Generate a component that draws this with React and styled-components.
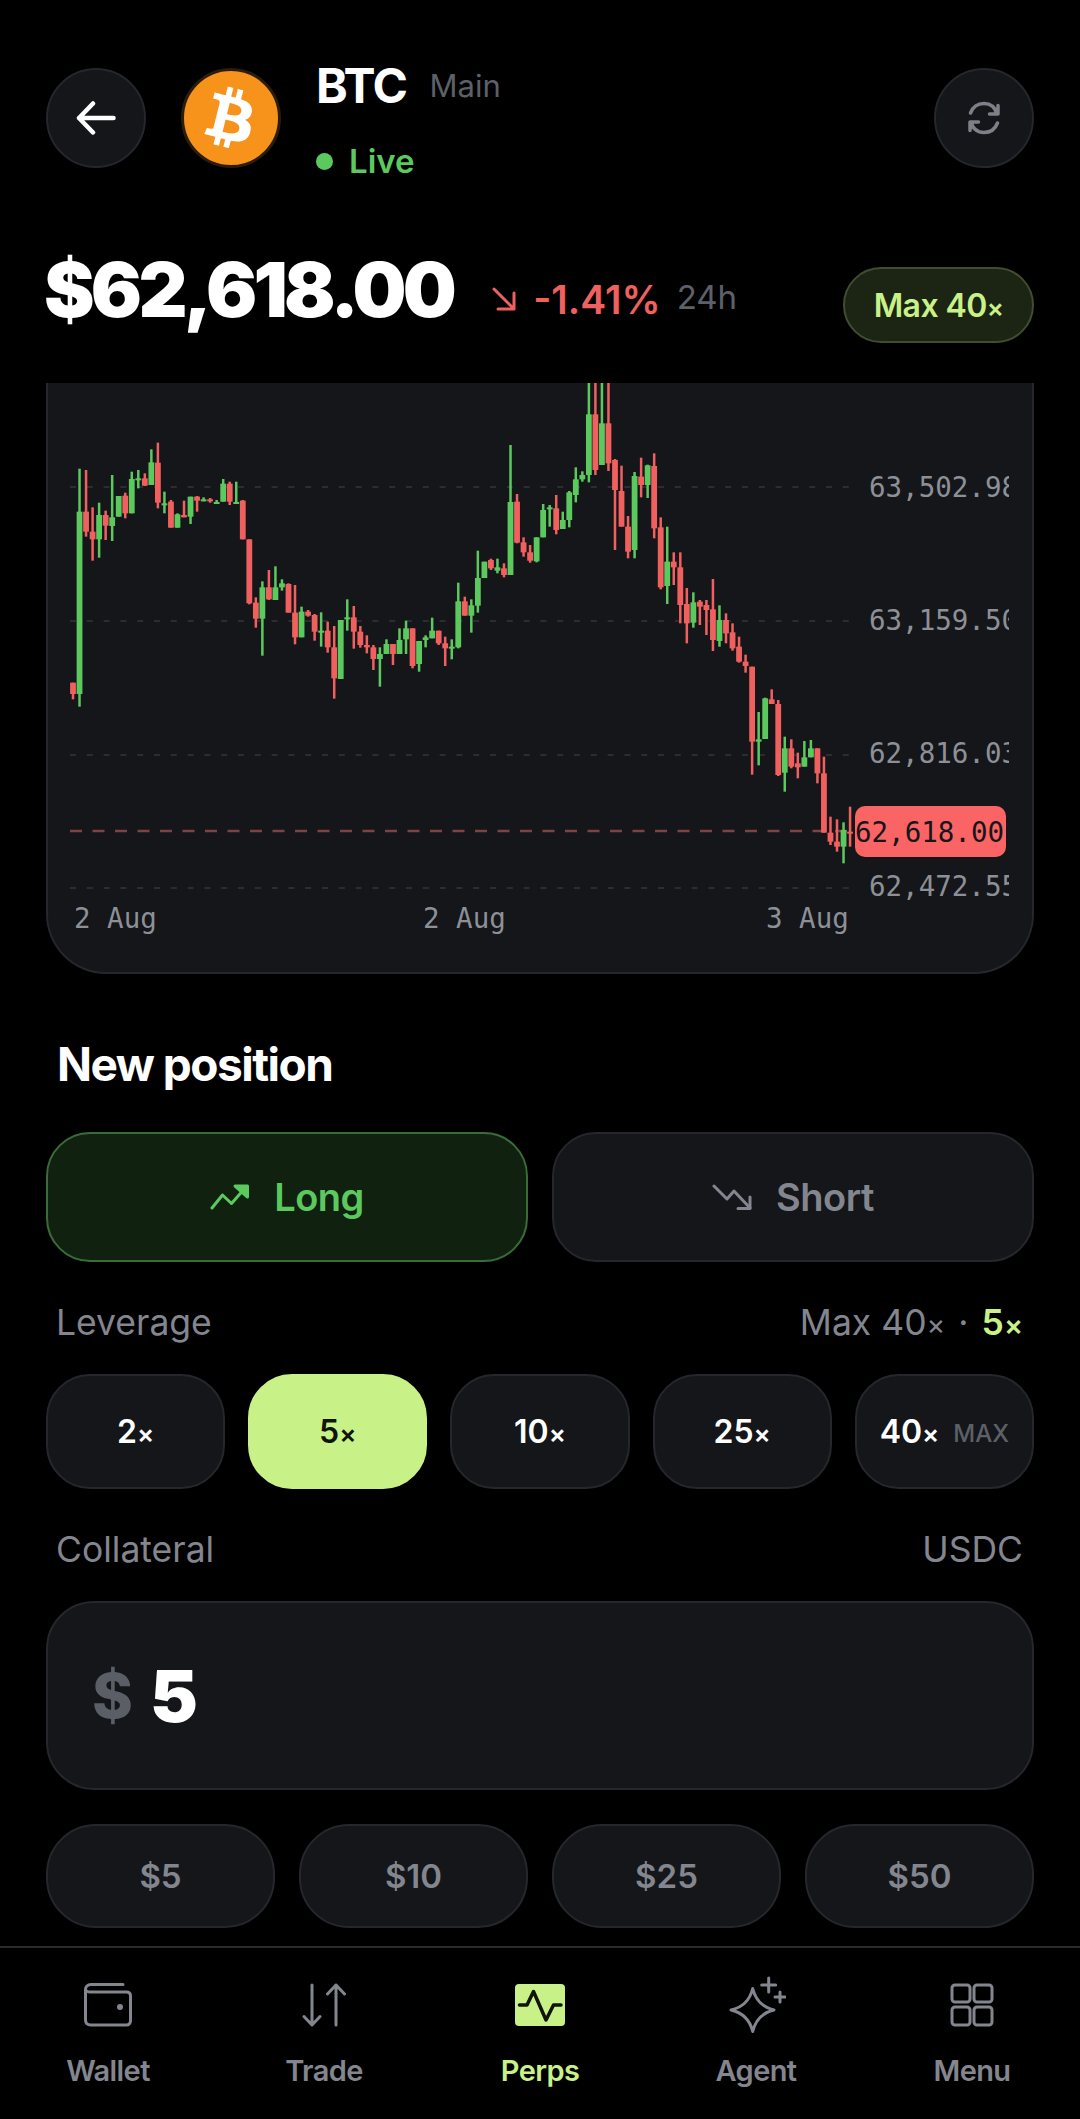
import React from "react";
import styled, { createGlobalStyle } from "styled-components";
import { FaBtc } from "react-icons/fa";

const GREEN = "#5cc95f";
const RED = "#f0605f";
const LIME = "#c8f288";
const GREY = "#83868e";
const PANEL = "#14161a";
const LINE = "#25272c";

// up, high, body top, body bottom, low (y values are 3x chart px, from 380)
const candles = [
  [0, 908, 908, 942, 958], [1, 266, 395, 942, 980], [0, 270, 395, 455, 470], [0, 382, 455, 478, 542],
  [1, 368, 405, 478, 533], [0, 392, 405, 437, 480], [1, 285, 412, 438, 483], [1, 348, 348, 410, 410],
  [0, 338, 347, 400, 415], [1, 275, 297, 400, 400], [1, 270, 295, 300, 325], [0, 280, 295, 317, 318],
  [1, 208, 247, 315, 315], [0, 188, 248, 368, 385], [1, 335, 370, 376, 400], [0, 360, 365, 443, 443],
  [1, 400, 403, 443, 443], [0, 362, 405, 412, 412], [1, 350, 350, 410, 432], [0, 348, 350, 362, 395],
  [1, 352, 358, 364, 364], [0, 354, 358, 364, 368], [1, 360, 366, 372, 372], [1, 297, 311, 365, 365],
  [0, 305, 311, 365, 375], [1, 305, 366, 372, 372], [0, 360, 362, 478, 478], [0, 478, 478, 670, 673],
  [0, 652, 668, 716, 743], [1, 604, 622, 716, 827], [0, 570, 622, 658, 660], [1, 559, 622, 660, 660],
  [1, 598, 610, 622, 632], [0, 610, 612, 698, 698], [0, 615, 698, 772, 793], [1, 680, 695, 772, 772],
  [0, 690, 695, 707, 710], [0, 702, 705, 755, 782], [1, 697, 752, 758, 800], [0, 725, 752, 802, 818],
  [0, 738, 802, 895, 956], [1, 720, 720, 897, 897], [1, 658, 712, 718, 752], [0, 678, 712, 755, 806],
  [0, 738, 755, 795, 803], [0, 766, 795, 802, 820], [0, 795, 802, 837, 870], [1, 802, 822, 837, 920],
  [1, 778, 792, 822, 822], [0, 792, 792, 822, 855], [1, 745, 780, 822, 822], [1, 722, 745, 778, 822],
  [0, 745, 745, 858, 865], [1, 783, 783, 852, 875], [1, 766, 772, 780, 802], [1, 713, 752, 775, 775],
  [0, 752, 752, 790, 795], [0, 770, 790, 805, 858], [1, 778, 800, 806, 838], [1, 608, 664, 802, 805],
  [0, 650, 664, 707, 707], [1, 658, 676, 707, 758], [1, 512, 594, 677, 698], [1, 545, 545, 594, 594],
  [0, 536, 540, 565, 570], [1, 536, 562, 572, 580], [0, 550, 565, 585, 592], [1, 195, 366, 585, 585],
  [0, 342, 365, 488, 490], [0, 472, 487, 517, 530], [0, 495, 517, 542, 548], [1, 472, 472, 544, 547],
  [1, 372, 390, 472, 472], [1, 375, 382, 388, 440], [0, 345, 385, 450, 463], [1, 395, 420, 447, 447],
  [1, 333, 337, 420, 442], [1, 262, 298, 345, 367], [1, 274, 285, 298, 305], [1, -20, 103, 285, 307],
  [0, -20, 103, 270, 285], [1, -20, 130, 255, 255], [0, -20, 130, 250, 273], [0, 237, 240, 330, 510],
  [0, 257, 333, 440, 440], [0, 408, 440, 515, 535], [1, 276, 288, 510, 535], [0, 233, 290, 315, 352],
  [1, 254, 256, 315, 354], [0, 220, 258, 445, 475], [0, 412, 442, 622, 628], [1, 440, 545, 618, 672],
  [0, 517, 545, 562, 615], [0, 517, 562, 675, 730], [0, 624, 672, 730, 790], [1, 637, 667, 728, 743],
  [0, 660, 665, 680, 735], [0, 660, 675, 690, 765], [0, 597, 688, 780, 813], [1, 676, 720, 783, 800],
  [0, 700, 720, 760, 790], [0, 730, 757, 805, 812], [0, 770, 800, 845, 848], [0, 824, 845, 858, 878],
  [0, 860, 860, 1085, 1184], [1, 996, 1078, 1085, 1156], [1, 953, 955, 1077, 1077], [0, 928, 958, 972, 972],
  [0, 960, 972, 1185, 1188], [1, 1070, 1105, 1178, 1235], [0, 1078, 1105, 1160, 1165], [0, 1118, 1150, 1162, 1195],
  [1, 1083, 1132, 1160, 1160], [1, 1080, 1105, 1132, 1132], [0, 1105, 1105, 1180, 1210], [0, 1130, 1180, 1358, 1358],
  [0, 1310, 1358, 1385, 1395], [0, 1318, 1385, 1400, 1415], [1, 1327, 1350, 1400, 1450], [0, 1280, 1355, 1360, 1400],
];

const gridLines = [487, 621, 755, 888];
const priceLabels = [
  ["63,502.98", 497],
  ["63,159.50", 630],
  ["62,816.03", 763],
  ["62,472.55", 896],
];
const timeLabels = [
  ["2 Aug", 74],
  ["2 Aug", 423],
  ["3 Aug", 766],
];

const Global = createGlobalStyle`
  html, body {
    margin: 0;
    background: #000;
  }
  * {
    box-sizing: border-box;
  }
`;

const Page = styled.div`
  width: 1080px;
  height: 2119px;
  overflow: hidden;
  background: #000;
  color: #fff;
  font-family: Inter, "Noto Sans", sans-serif;
  display: flex;
  flex-direction: column;
`;

const Header = styled.header`
  display: flex;
  align-items: stretch;
  height: 100px;
  margin: 68px 46px 0;
`;

const RoundButton = styled.div`
  width: 100px;
  height: 100px;
  flex: none;
  border-radius: 50%;
  background: ${PANEL};
  border: 2px solid ${LINE};
  display: flex;
  align-items: center;
  justify-content: center;
  margin-left: ${(p) => (p.$right ? "auto" : "0")};
`;

const Logo = styled.div`
  width: 100px;
  height: 100px;
  flex: none;
  margin-left: 35px;
  border-radius: 50%;
  background: #f7931a;
  border: 3px solid #2c1c0c;
  display: flex;
  align-items: center;
  justify-content: center;
`;

const BitcoinMark = styled(FaBtc)`
  transform: rotate(14deg);
`;

const Titles = styled.div`
  margin-left: 35px;
  display: flex;
  flex-direction: column;
  justify-content: space-between;
`;

const NameRow = styled.div`
  display: flex;
  align-items: center;
  gap: 23px;
  margin-top: -12px;
`;

const Name = styled.span`
  font-size: 48px;
  font-weight: 700;
  letter-spacing: -1.5px;
`;

const Tag = styled.span`
  font-size: 31px;
  color: #5d6068;
`;

const LiveRow = styled.div`
  display: flex;
  align-items: center;
  gap: 16px;
  font-size: 33px;
  font-weight: 600;
  color: ${GREEN};
  margin-bottom: -13px;
`;

const Dot = styled.i`
  width: 17px;
  height: 17px;
  flex: none;
  border-radius: 50%;
  background: ${GREEN};
`;

const PriceRow = styled.div`
  display: flex;
  align-items: center;
  height: 76px;
  margin: 99px 46px 0;
`;

const Price = styled.div`
  font-size: 76px;
  font-weight: 900;
  letter-spacing: -3.75px;
  margin: 0 0 32px -2px;
`;

const Change = styled.div`
  display: flex;
  align-items: center;
  margin: 0 0 12px 39px;
  font-size: 39px;
  font-weight: 600;
  color: ${RED};
  gap: 17px;
`;

const Period = styled.span`
  font-size: 33px;
  font-weight: 400;
  color: #5d6068;
  margin: 0 0 5px -1px;
`;

const MaxPill = styled.div`
  margin-left: auto;
  width: 191px;
  height: 76px;
  flex: none;
  border-radius: 38px;
  background: #1c2414;
  border: 2px solid #414c30;
  color: ${LIME};
  font-size: 32px;
  font-weight: 600;
  letter-spacing: -0.6px;
  display: flex;
  align-items: center;
  justify-content: center;
`;

const ChartCard = styled.section`
  margin: 40px 46px 0;
  height: 591px;
  padding: 0 23px 0 22px;
  background: ${PANEL};
  border: 2px solid ${LINE};
  border-top: none;
  border-radius: 0 0 60px 60px;
`;

const ChartSvg = styled.svg`
  display: block;
  width: 939px;
  height: 589px;
`;

const AxisText = styled.text`
  font-family: "DejaVu Sans Mono", monospace;
  font-size: 27.5px;
  fill: ${(p) => p.$fill || "#8d9097"};
`;

const Heading = styled.h2`
  margin: 65px 57px 0;
  font-size: 46px;
  line-height: 50px;
  font-weight: 700;
  letter-spacing: -1.5px;
`;

const SideRow = styled.div`
  display: grid;
  grid-template-columns: 1fr 1fr;
  gap: 24px;
  margin: 43px 46px 0;
`;

const SideButton = styled.div`
  height: 130px;
  border-radius: 44px;
  display: flex;
  align-items: center;
  justify-content: center;
  gap: 24px;
  font-size: 38px;
  font-weight: 600;
  letter-spacing: -0.5px;
  background: ${(p) => (p.$active ? "#10220f" : PANEL)};
  border: 2px solid ${(p) => (p.$active ? "#3b6b39" : LINE)};
  color: ${(p) => (p.$active ? GREEN : GREY)};
`;

const LabelRow = styled.div`
  display: flex;
  justify-content: space-between;
  align-items: baseline;
  margin: ${(p) => p.$top}px 57px 0 56px;
  font-size: 35.5px;
  line-height: 40px;
  color: ${GREY};
`;

const Lime = styled.span`
  color: ${LIME};
  font-weight: 600;
`;

const Separator = styled.span`
  margin: 0 13px;
`;

const Times = styled.span`
  font-size: 0.8em;
`;

const LeverageRow = styled.div`
  display: grid;
  grid-template-columns: repeat(5, 1fr);
  gap: 23px;
  margin: 29px 46px 0;
`;

const LeverageChip = styled.div`
  height: 115px;
  border-radius: 44px;
  display: flex;
  align-items: center;
  justify-content: center;
  gap: 14px;
  font-size: 32px;
  font-weight: 600;
  background: ${(p) => (p.$active ? LIME : PANEL)};
  border: 2px solid ${(p) => (p.$active ? LIME : LINE)};
  color: ${(p) => (p.$active ? "#10140a" : "#fff")};
`;

const MaxTag = styled.span`
  font-size: 24px;
  font-weight: 500;
  color: #5d6068;
  margin-top: 4px;
`;

const AmountBox = styled.div`
  height: 189px;
  margin: 31px 46px 0;
  padding-left: 44px;
  border-radius: 48px;
  background: ${PANEL};
  border: 2px solid ${LINE};
  display: flex;
  align-items: center;
  gap: 17px;
  font-size: 72px;
  font-weight: 900;
`;

const Dollar = styled.span`
  font-size: 62px;
  font-weight: 800;
  color: #5a5e66;
`;

const QuickRow = styled.div`
  display: grid;
  grid-template-columns: repeat(4, 1fr);
  gap: 24px;
  margin: 34px 46px 0;
`;

const QuickChip = styled.div`
  height: 104px;
  border-radius: 50px;
  background: ${PANEL};
  border: 2px solid ${LINE};
  color: ${GREY};
  font-size: 33px;
  font-weight: 600;
  display: flex;
  align-items: center;
  justify-content: center;
`;

const Nav = styled.nav`
  margin-top: auto;
  height: 173px;
  border-top: 2px solid #2a2b2f;
  display: grid;
  grid-template-columns: repeat(5, 1fr);
`;

const Tab = styled.div`
  display: flex;
  flex-direction: column;
  align-items: center;
  padding-top: 27px;
  font-size: 29px;
  line-height: 34px;
  font-weight: 600;
  letter-spacing: -0.6px;
  color: ${(p) => (p.$active ? LIME : GREY)};
`;

const TabIcon = styled.div`
  height: 60px;
  margin-bottom: 19px;
  display: flex;
  align-items: center;
  justify-content: center;
`;

const Stroke = styled.svg`
  display: block;
  fill: none;
  stroke: ${(p) => p.$color || "#83868e"};
  stroke-width: ${(p) => p.$width || 3};
  stroke-linecap: round;
  stroke-linejoin: round;
`;

const Candle = ({ up, high, top, bottom, low, index }) => {
  const x = 73 + index * 6.53;
  const color = up ? GREEN : RED;
  const toY = (v) => 380 + v / 3;
  return (
    <g fill={color}>
      <rect x={x - 1.25} y={toY(high)} width={2.5} height={(low - high) / 3} />
      <rect x={x - 2.9} y={toY(top)} width={5.8} height={Math.max((bottom - top) / 3, 2)} />
    </g>
  );
};

const Chart = () => (
  <ChartSvg viewBox="70 383 939 589">
    {gridLines.map((y) => (
      <line key={y} x1={70} x2={852} y1={y} y2={y} stroke="#2b2d31" strokeWidth={2} strokeDasharray="6 10.8" />
    ))}
    <line x1={70} x2={852} y1={831} y2={831} stroke="#7d4246" strokeWidth={2.5} strokeDasharray="12 10.5" />
    {candles.map(([up, high, top, bottom, low], i) => (
      <Candle key={i} index={i} up={up} high={high} top={top} bottom={bottom} low={low} />
    ))}
    {priceLabels.map(([label, y]) => (
      <AxisText key={label} x={869} y={y}>{label}</AxisText>
    ))}
    <rect x={855} y={806} width={151} height={51} rx={10} fill="#fb6464" />
    <AxisText x={855} y={842} $fill="#14161a">62,618.00</AxisText>
    {timeLabels.map(([label, x]) => (
      <AxisText key={x} x={x} y={928}>{label}</AxisText>
    ))}
  </ChartSvg>
);

const Multiple = ({ value }) => (
  <span>
    {value}
    <Times>×</Times>
  </span>
);

const App = () => (
  <Page>
    <Global />
    <Header>
      <RoundButton>
        <Stroke width={40} height={34} viewBox="0 0 40 34" $color="#fff" $width={4.5}>
          <path d="M37.5 17H3M17 2.500L3 17l14 14.500" />
        </Stroke>
      </RoundButton>
      <Logo>
        <BitcoinMark size={60} color="#fff" />
      </Logo>
      <Titles>
        <NameRow>
          <Name>BTC</Name>
          <Tag>Main</Tag>
        </NameRow>
        <LiveRow>
          <Dot />
          Live
        </LiveRow>
      </Titles>
      <RoundButton $right>
        <Stroke width={34} height={34} viewBox="0 0 34 34" $color="#7d8087" $width={3.5}>
          <path d="M3.500 12C6 5.500 11.500 2.500 17 2.500c6 0 11 3.500 13 10.500M31 4.500V13h-8.500" />
          <path d="M30.500 22c-2.500 6.500-8 9.500-13.500 9.500-6 0-11-3.500-13-10.500M3 29.500V21h8.500" />
        </Stroke>
      </RoundButton>
    </Header>

    <PriceRow>
      <Price>$62,618.00</Price>
      <Change>
        <Stroke width={24} height={24} viewBox="0 0 24 24" $color={RED} $width={3}>
          <path d="M2 2l20 20M22 6v16H6" />
        </Stroke>
        -1.41%
        <Period>24h</Period>
      </Change>
      <MaxPill>
        <Multiple value="Max 40" />
      </MaxPill>
    </PriceRow>

    <ChartCard>
      <Chart />
    </ChartCard>

    <Heading>New position</Heading>

    <SideRow>
      <SideButton $active>
        <Stroke width={40} height={26} viewBox="0 0 40 26" $color={GREEN} $width={3}>
          <path d="M2 24l10.500-13 9 8.500L36 3" />
          <path d="M25 2h12.500v11z" fill={GREEN} />
        </Stroke>
        Long
      </SideButton>
      <SideButton>
        <Stroke width={40} height={26} viewBox="0 0 40 26" $color={GREY} $width={3}>
          <path d="M2 2l13 13 7-8 16 17" />
          <path d="M26 24.500h12V13" />
        </Stroke>
        Short
      </SideButton>
    </SideRow>

    <LabelRow $top={41}>
      <span>Leverage</span>
      <span>
        <Multiple value="Max 40" />
        <Separator>·</Separator>
        <Lime><Multiple value="5" /></Lime>
      </span>
    </LabelRow>

    <LeverageRow>
      <LeverageChip><Multiple value="2" /></LeverageChip>
      <LeverageChip $active><Multiple value="5" /></LeverageChip>
      <LeverageChip><Multiple value="10" /></LeverageChip>
      <LeverageChip><Multiple value="25" /></LeverageChip>
      <LeverageChip>
        <Multiple value="40" />
        <MaxTag>MAX</MaxTag>
      </LeverageChip>
    </LeverageRow>

    <LabelRow $top={41}>
      <span>Collateral</span>
      <span>USDC</span>
    </LabelRow>

    <AmountBox>
      <Dollar>$</Dollar>
      <span>5</span>
    </AmountBox>

    <QuickRow>
      <QuickChip>$5</QuickChip>
      <QuickChip>$10</QuickChip>
      <QuickChip>$25</QuickChip>
      <QuickChip>$50</QuickChip>
    </QuickRow>

    <Nav>
      <Tab>
        <TabIcon>
          <Stroke width={48} height={44} viewBox="0 0 48 44">
            <path d="M39 1.500H7C3.500 1.500 1.500 4 1.500 6.500V37c0 3 2 5 5 5h36c2.500 0 4-2 4-4.500V13c0-2.500-1.500-4-4-4H6.500c-3 0-5-1.500-5-3" />
            <circle cx={36} cy={24} r={1.500} fill="#83868e" />
          </Stroke>
        </TabIcon>
        Wallet
      </Tab>
      <Tab>
        <TabIcon>
          <Stroke width={44} height={44} viewBox="0 0 44 44">
            <path d="M10 2v40M2 33.500l8 8.500 8-8.500" />
            <path d="M34 42V2M25.500 11L34 2l8.500 9" />
          </Stroke>
        </TabIcon>
        Trade
      </Tab>
      <Tab $active>
        <TabIcon>
          <Stroke width={50} height={42} viewBox="0 0 50 42" $color="#10140a" $width={3.5}>
            <rect width={50} height={42} rx={4} fill={LIME} stroke="none" />
            <path d="M4.500 21H12l6.500-13.500L31 36l7.500-15H46" />
          </Stroke>
        </TabIcon>
        Perps
      </Tab>
      <Tab>
        <TabIcon>
          <Stroke width={60} height={60} viewBox="0 0 60 60">
            <path d="M26.700 13.500Q31 31 48 35 31 39 26.700 56.500 22.500 39 5 35 22.500 31 26.700 13.500z" />
            <path d="M42.700 3v14M35.700 10h14M54 17v10M49 22h10" />
          </Stroke>
        </TabIcon>
        Agent
      </Tab>
      <Tab>
        <TabIcon>
          <Stroke width={44} height={44} viewBox="0 0 44 44">
            <rect x={2} y={2} width={18} height={17} rx={3} />
            <rect x={24} y={2} width={18} height={17} rx={3} />
            <rect x={2} y={24} width={18} height={18} rx={3} />
            <rect x={24} y={24} width={18} height={18} rx={3} />
          </Stroke>
        </TabIcon>
        Menu
      </Tab>
    </Nav>
  </Page>
);

export default App;
